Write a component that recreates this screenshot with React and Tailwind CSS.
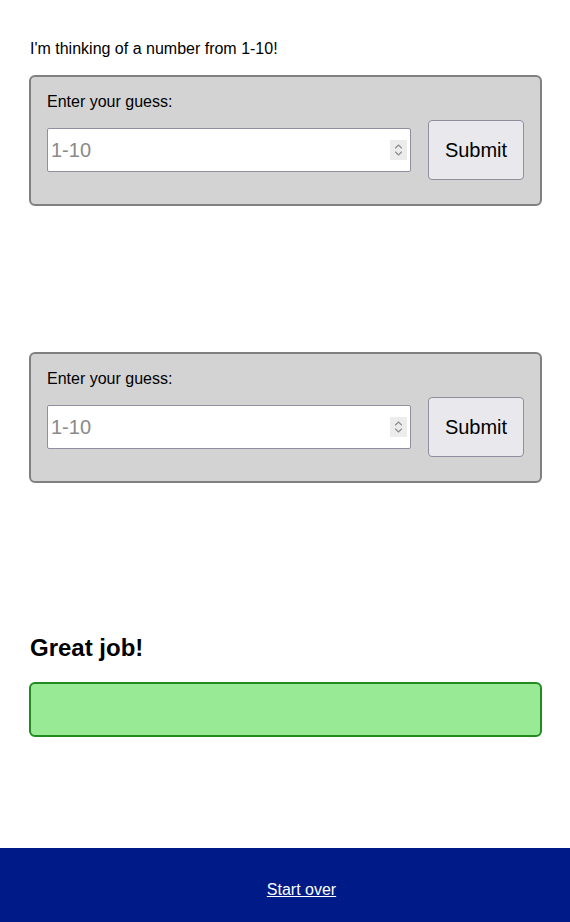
import React from "react";

function Spinner() {
  return (
    <div className="absolute right-[4px] top-1/2 -translate-y-1/2 w-[17px] h-[20px] bg-[#ececec] flex items-center justify-center">
      <svg width="9" height="14" viewBox="0 0 9 14" fill="none" stroke="#8c8c8c" strokeWidth="1.1" strokeLinecap="round" strokeLinejoin="round">
        <path d="M1.5 5 L4.5 2 L7.5 5" />
        <path d="M1.5 9 L4.5 12 L7.5 9" />
      </svg>
    </div>
  );
}

function GuessBox() {
  return (
    <div className="border-2 border-[#808080] rounded-[6px] bg-[#d3d3d3] pt-[16px] px-[16px] pb-[24px]">
      <label className="block text-[16px] leading-[18px] text-black">Enter your guess:</label>
      <div className="mt-[9px] flex items-center gap-[17px]">
        <div className="relative flex-1">
          <input
            type="text"
            placeholder="1-10"
            className="w-full h-[44px] bg-white border border-[#8f8f9d] rounded-[2px] pl-[3px] text-[20px] text-black placeholder:text-[#8a8a8a] outline-none"
            style={{ fontFamily: '"Liberation Sans", Arial, sans-serif' }}
          />
          <Spinner />
        </div>
        <button className="w-[96px] h-[60px] bg-[#e9e9ed] border border-[#8f8f9d] rounded-[4px] text-[20px] text-black">
          Submit
        </button>
      </div>
    </div>
  );
}

export default function App() {
  return (
    <div className="min-h-[922px] bg-white flex flex-col" style={{ fontFamily: '"Liberation Sans", Arial, sans-serif' }}>
      <div className="pl-[29px] pr-[28px] pt-[40px] flex-1">
        <p className="text-[16px] leading-[18px] text-black pl-[1px]">I'm thinking of a number from 1-10!</p>
        <div className="mt-[17px]">
          <GuessBox />
        </div>
        <div className="mt-[146px]">
          <GuessBox />
        </div>
        <h2 className="mt-[151px] text-[24px] leading-[28px] font-bold text-black pl-[1px]">Great job!</h2>
        <div className="mt-[20px] h-[55px] border-2 border-[#228b1f] rounded-[6px] bg-[#98eb94]"></div>
      </div>
      <footer className="mt-[111px] h-[74px] bg-[#001a88] flex justify-center pl-[33px] pt-[33px]">
        <a href="#" className="text-white underline text-[16px] leading-[18px] h-[18px]">Start over</a>
      </footer>
    </div>
  );
}
